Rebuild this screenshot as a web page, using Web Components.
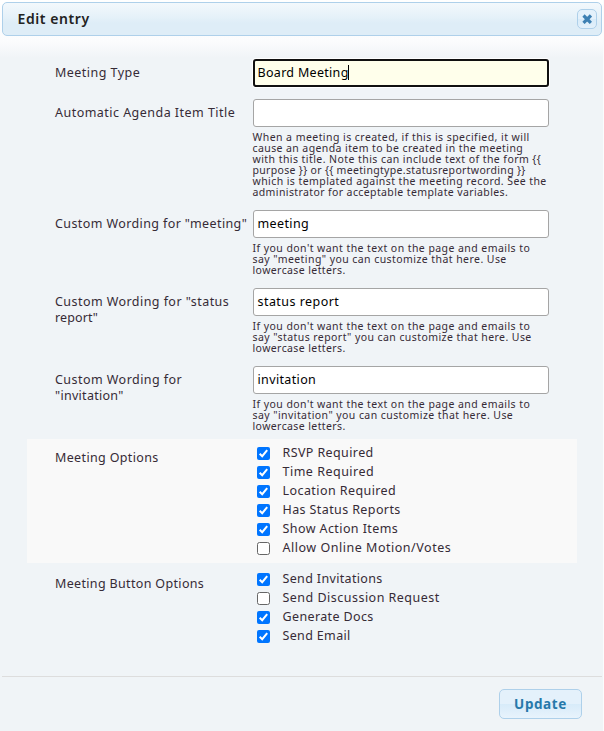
<!DOCTYPE html>
<html lang="en">
<head>
<meta charset="utf-8">
<title>Edit entry</title>
<style>
html,body{margin:0;height:100%}
body{font-family:"Noto Sans","Open Sans",sans-serif;font-size:12.5px;color:#362b36;background:#f0f4f7;overflow:hidden}
</style>
</head>
<body>
<edit-dialog></edit-dialog>
<script>
// One line of text, tracked so that it spans `w` pixels.
class TextLine extends HTMLElement {
  connectedCallback() {
    this.attachShadow({mode: "open"}).innerHTML =
      `<style>:host{display:block;white-space:pre}span{display:inline-block}</style><span><slot></slot></span>`;
    const span = this.shadowRoot.querySelector("span");
    const w = +this.getAttribute("w"), n = this.textContent.length;
    if (w) {
      span.style.letterSpacing = "0px";
      const natural = span.getBoundingClientRect().width;
      span.style.letterSpacing = ((w - natural) / (n - 0.5)).toFixed(3) + "px";
    }
  }
}
customElements.define("text-line", TextLine);

const lines = (items) => items.map(([t, w]) => `<text-line w="${w}">${t}</text-line>`).join("");

class DialogTitle extends HTMLElement {
  connectedCallback() {
    this.attachShadow({mode: "open"}).innerHTML = `<style>
      :host{display:flex;box-sizing:border-box;align-items:center;justify-content:space-between;height:34px;margin:0 2px;padding:0 4px 0 14.5px;
        border:1px solid #aed0ea;border-radius:5px;background:linear-gradient(#f3f8fc 0,#e5f1f9 45%,#deedf7 62%,#deedf7 100%);
        color:#222;font-weight:600;font-size:14px}
      .name{padding-bottom:2px}
      .close{display:flex;box-sizing:border-box;align-items:center;justify-content:center;width:20px;height:20px;border:1px solid #aed0ea;border-radius:5px;background:linear-gradient(#e4f1fb 50%,#d7ebf9 50%,#e4f1fb)}
    </style><div class="name"><slot></slot></div><span class="close"><svg width="10" height="10" viewBox="0 0 10 10"><path d="M1.5 1.5 8.9 8.9M8.9 1.5 1.5 8.9" stroke="#3d80b3" stroke-width="3.2"/></svg></span>`;
  }
}
customElements.define("dialog-title", DialogTitle);

class TextField extends HTMLElement {
  connectedCallback() {
    const focus = this.hasAttribute("focused");
    this.attachShadow({mode: "open"}).innerHTML = `<style>
      :host{display:flex;box-sizing:border-box;align-items:center;width:296px;height:28px;border-radius:3px;border:1px solid #a5a5a5;background:#fff;padding:0 0 2px 3.5px;color:#000}
      :host([focused]){border:2px solid #101010;background:#ffffeb;padding:0 0 2px 2.5px;box-shadow:0 0 0 1px #fff}
      i{width:1px;height:15px;margin-left:-1px;background:#000}
    </style><slot></slot>${focus ? "<i></i>" : ""}`;
  }
}
customElements.define("text-field", TextField);

class FormRow extends HTMLElement {
  connectedCallback() {
    this.attachShadow({mode: "open"}).innerHTML = `<style>
      :host{display:grid;grid-template-columns:198px 296px;box-sizing:border-box;height:var(--h);padding-left:28px}
      .label{padding-top:var(--label-top,6px);line-height:16px}
      .help{padding-top:5px;margin-left:-.5px;font-size:10.5px;line-height:11px}
    </style><div class="label"><slot name="label"></slot></div><div><slot></slot><div class="help"><slot name="help"></slot></div></div>`;
  }
}
customElements.define("form-row", FormRow);

class CheckItem extends HTMLElement {
  connectedCallback() {
    const on = this.hasAttribute("checked");
    this.attachShadow({mode: "open"}).innerHTML = `<style>
      :host{display:flex;align-items:center;height:19px;padding-left:4px;line-height:19px}
      svg{margin:2px 12.5px 0 0;flex:none}
    </style><svg width="13" height="13" viewBox="0 0 13 13">${on
      ? '<rect width="13" height="13" rx="2" fill="#0075ff"/><path d="M2.7 6.7 5.2 9.2 10.2 3.1" fill="none" stroke="#fff" stroke-width="2"/>'
      : '<rect x=".5" y=".5" width="12" height="12" rx="2" fill="#fff" stroke="#666"/>'}</svg><slot></slot>`;
  }
}
customElements.define("check-item", CheckItem);

class UpdateButton extends HTMLElement {
  connectedCallback() {
    this.attachShadow({mode: "open"}).innerHTML = `<style>
      :host{display:flex;box-sizing:border-box;align-items:center;justify-content:center;width:83px;height:30px;padding-bottom:1px;border:1px solid #aed0ea;border-radius:5px;background:linear-gradient(#e4f1fb 50%,#d7ebf9 50%,#e8f3fc);color:#2779aa;font-weight:700;font-size:13.5px}
    </style><slot></slot>`;
  }
}
customElements.define("update-button", UpdateButton);

const row = (h, label, value, help, focused) => `<form-row style="--h:${h}px">
  <div slot="label">${lines(label)}</div>
  <text-field ${focused ? "focused" : ""}>${value ? lines([value]) : ""}</text-field>
  <div slot="help">${lines(help)}</div></form-row>`;
const checks = (items) => items.map(([t, w, on]) => `<check-item ${on ? "checked" : ""}>${lines([[t, w]])}</check-item>`).join("");
const custom = (say, w) => [["If you don't want the text on the page and emails to", 277.5], [say, w], ["lowercase letters.", 93]];

class EditDialog extends HTMLElement {
  connectedCallback() {
    this.attachShadow({mode: "open"}).innerHTML = `<style>
      :host{display:flex;flex-direction:column;box-sizing:border-box;height:731px;padding-top:2px;border-right:1px solid #fafcfd;background:linear-gradient(#fff 0,#fbfcfd 42px,#f0f4f7 58px)}
      dialog-title{margin-right:1px}
      form{display:block;margin:23px 26px 0 27px}
      .shade{background:#f9f9f9}
      footer{display:flex;justify-content:flex-end;margin:auto 1px 0 2px;height:55px;box-sizing:border-box;border-top:1px solid #ddd;padding:12px 20px 0 0}
    </style>
    <dialog-title>${lines([["Edit entry", 72]])}</dialog-title>
    <form>
      ${row(40, [["Meeting Type", 85]], ["Board Meeting", 91], [], true)}
      ${row(111, [["Automatic Agenda Item Title", 180]], null, [
        ["When a meeting is created, if this is specified, it will", 277],
        ["cause an agenda item to be created in the meeting", 270.5],
        ["with this title. Note this can include text of the form {{", 288.5],
        ["purpose }} or {{ meetingtype.statusreportwording }}", 273],
        ["which is templated against the meeting record. See the", 294],
        ["administrator for acceptable template variables.", 255.5]])}
      ${row(78, [['Custom Wording for "meeting"', 192]], ["meeting", 51.5], custom('say "meeting" you can customize that here. Use', 254))}
      ${row(78, [['Custom Wording for "status', 174], ['report"', 43]], ["status report", 81.5], custom('say "status report" you can customize that here. Use', 279))}
      ${row(73, [["Custom Wording for", 127], ['"invitation"', 68.5]], ["invitation", 58.5], custom('say "invitation" you can customize that here. Use', 260.5))}
      <form-row class="shade" style="--h:124px;--label-top:11px"><div slot="label">${lines([["Meeting Options", 103.5]])}</div>
        <div style="padding-top:4px">${checks([["RSVP Required", 91, 1], ["Time Required", 91.5, 1], ["Location Required", 113.5, 1], ["Has Status Reports", 118, 1], ["Show Action Items", 115.5, 1], ["Allow Online Motion/Votes", 168.5, 0]])}</div></form-row>
      <form-row style="--h:100px;--label-top:13px"><div slot="label">${lines([["Meeting Button Options", 149]])}</div>
        <div style="padding-top:6px">${checks([["Send Invitations", 100, 1], ["Send Discussion Request", 157, 0], ["Generate Docs", 91, 1], ["Send Email", 68, 1]])}</div></form-row>
    </form>
    <footer><update-button>${lines([["Update", 52.5]])}</update-button></footer>`;
  }
}
customElements.define("edit-dialog", EditDialog);
</script>
</body>
</html>
